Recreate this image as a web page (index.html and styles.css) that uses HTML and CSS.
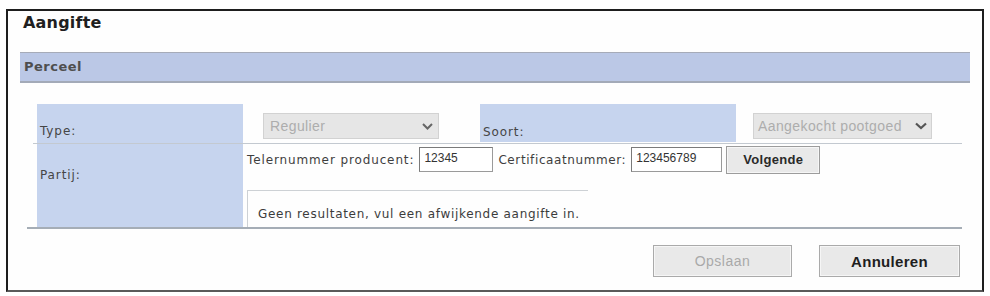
FILE: index.html
```html
<!DOCTYPE html>
<html lang="nl">
<head>
<meta charset="utf-8">
<title>Aangifte</title>
<link rel="stylesheet" href="styles.css">
</head>
<body>
<div class="frame">
  <h1 class="title">Aangifte</h1>
  <div class="bar">Perceel</div>
  <div class="form">
    <div class="row row-type">
      <div class="lab lab-type">Type:</div>
      <div class="cell cell-sel1">
        <div class="select sel-regulier"><span>Regulier</span>
          <svg class="chev" width="11" height="7" viewBox="0 0 11 7"><polyline points="1,1 5.5,5.5 10,1" fill="none" stroke="#666" stroke-width="2"/></svg>
        </div>
      </div>
      <div class="lab lab-soort">Soort:</div>
      <div class="cell cell-sel2">
        <div class="select sel-soort"><span>Aangekocht pootgoed</span>
          <svg class="chev" width="12" height="8" viewBox="0 0 12 8"><polyline points="1,1.5 6,6 11,1.5" fill="none" stroke="#555" stroke-width="2.2"/></svg>
        </div>
      </div>
    </div>
    <div class="row row-partij">
      <div class="lab lab-partij">Partij:</div>
      <div class="cell cell-partij">
        <div class="inputs">
          <span class="flabel">Telernummer producent:</span>
          <div class="input in-teler">12345</div>
          <span class="flabel cert">Certificaatnummer:</span>
          <div class="input in-cert">123456789</div>
          <div class="btn btn-volgende">Volgende</div>
        </div>
        <div class="results">Geen resultaten, vul een afwijkende aangifte in.</div>
      </div>
    </div>
  </div>
  <div class="actions">
    <div class="btn btn-big btn-disabled">Opslaan</div>
    <div class="btn btn-big btn-cancel">Annuleren</div>
  </div>
</div>
</body>
</html>
```

FILE: styles.css
```css
html, body {
  margin: 0;
  padding: 0;
  background: #ffffff;
}

body {
  font-family: "DejaVu Sans", Verdana, sans-serif;
  color: #444;
}

.frame {
  box-sizing: border-box;
  width: 978px;
  height: 283px;
  margin: 9px 0 0 6px;
  border: 2px solid #1e1e1e;
  border-bottom-color: #5a5a5a;
  background: #fefefe;
}

.title {
  box-sizing: border-box;
  margin: 0;
  height: 41px;
  padding: 2px 0 0 15px;
  font-size: 16px;
  line-height: 20px;
  font-weight: bold;
  letter-spacing: 0.2px;
  color: #1f1f1f;
}

.bar {
  box-sizing: border-box;
  margin-left: 12px;
  width: 950px;
  height: 31px;
  border-top: 1px solid #a6abb8;
  border-bottom: 2px solid #a3aab8;
  background: #bbc8e6;
  padding-left: 4px;
  font-size: 13px;
  line-height: 28px;
  font-weight: bold;
  letter-spacing: 0.5px;
  color: #4e4e4e;
}

.form {
  margin: 21px 0 0 25px;
  width: 929px;
}

.row-type {
  box-sizing: border-box;
  display: grid;
  grid-template-columns: 210px 237px 256px 226px;
  height: 40px;
  border-bottom: 1px solid #c3c9d0;
}

.lab {
  background: #c6d4ee;
  font-size: 12px;
  line-height: 15px;
  letter-spacing: 0.9px;
  color: #454545;
}

.lab-type {
  margin-left: 4px;
  display: flex;
  align-items: flex-end;
  padding: 0 0 4px 3px;
}

.lab-soort {
  display: flex;
  align-items: flex-end;
  padding: 0 0 2px 3px;
  margin-bottom: 1px;
}

.cell-sel1 {
  padding: 9px 0 0 20px;
}

.cell-sel2 {
  padding: 9px 0 0 17px;
}

.select {
  box-sizing: border-box;
  height: 26px;
  display: flex;
  align-items: center;
  justify-content: space-between;
  background: #e6e6e6;
  border: 1px solid #d2d2d2;
  font-family: "Liberation Sans", Arial, sans-serif;
  font-size: 14px;
  letter-spacing: 0.4px;
  color: #adadad;
}

.sel-regulier {
  width: 176px;
  padding: 0 5px 0 6px;
}

.sel-soort {
  width: 179px;
  padding: 0 4px 0 4px;
}

.row-partij {
  box-sizing: border-box;
  display: grid;
  grid-template-columns: 210px 1fr;
  height: 85px;
  margin-left: -6px;
  padding-left: 6px;
  border-bottom: 2px solid #a5adb6;
}

.lab-partij {
  margin-left: 4px;
  padding: 24px 0 0 3px;
}

.cell-partij {
  display: flex;
  flex-direction: column;
  padding-left: 4px;
}

.inputs {
  display: flex;
  align-items: center;
  margin-top: 1px;
  height: 29px;
}

.flabel {
  font-size: 12px;
  letter-spacing: 0.88px;
  color: #3e3e3e;
  margin-right: 5px;
}

.flabel.cert {
  letter-spacing: 0.6px;
  margin-left: 5px;
  margin-right: 5px;
}

.input {
  box-sizing: border-box;
  height: 25px;
  border: 1px solid #9a9a9a;
  border-top-color: #7a7a7a;
  border-left-color: #7a7a7a;
  background: #fff;
  padding: 0 0 0 4px;
  font-family: "Liberation Sans", Arial, sans-serif;
  font-size: 12px;
  line-height: 21px;
  color: #333;
}

.in-teler {
  width: 74px;
}

.in-cert {
  width: 91px;
}

.btn {
  box-sizing: border-box;
  display: flex;
  align-items: center;
  justify-content: center;
  font-family: "Liberation Sans", Arial, sans-serif;
  background: #e9e9e9;
  border: 1px solid #9c9c9c;
  box-shadow: inset 0 0 0 1px #f6f6f6;
}

.btn-volgende {
  margin-left: 4px;
  width: 94px;
  height: 28px;
  font-size: 13px;
  font-weight: bold;
  letter-spacing: 0.3px;
  color: #2a2a2a;
}

.results {
  box-sizing: border-box;
  margin-top: 16px;
  width: 341px;
  flex: 1;
  border-top: 1px solid #cdd1d5;
  border-left: 1px solid #cdd1d5;
  padding: 16px 0 0 10px;
  font-size: 12px;
  line-height: 15px;
  letter-spacing: 0.7px;
  white-space: nowrap;
  color: #3c3c3c;
}

.actions {
  display: flex;
  justify-content: flex-end;
  gap: 27px;
  margin-top: 16px;
  padding-right: 22px;
}

.btn-big {
  width: 140px;
  height: 32px;
  border-color: #aaaaaa;
  font-size: 15px;
  letter-spacing: 0.3px;
}

.btn-disabled {
  width: 139px;
  font-size: 14px;
  letter-spacing: 0.5px;
  color: #a9a9a9;
}

.btn-cancel {
  width: 141px;
  font-weight: bold;
  color: #1e1e1e;
}
```
